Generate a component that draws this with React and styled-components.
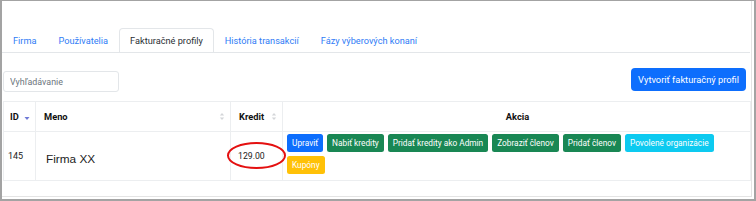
import styled, { createGlobalStyle } from 'styled-components'

const GlobalStyle = createGlobalStyle`
  html, body {
    margin: 0;
    padding: 0;
    background: #fff;
  }
  body {
    font-family: Roboto, "Noto Sans", "Liberation Sans", sans-serif;
    color: #212529;
  }
`

const Frame = styled.div`
  box-sizing: border-box;
  width: 756px;
  height: 201px;
  border-style: solid;
  border-color: #a3a3a3;
  border-width: 1px 2px 2px 2px;
  box-shadow: inset -2px -2px 0 0 #fff, inset -3px -3px 0 0 #e4e4e4;
  padding: 27px 4px 0 0;
  overflow: hidden;
`

const Tabs = styled.ul`
  display: flex;
  margin: 0;
  padding: 0;
  list-style: none;
  height: 24px;
  border-bottom: 1px solid #e3e6e9;
`

const Tab = styled.li`
  display: flex;
  align-items: center;
  padding: 0 10px;
  font-size: 9.2px;
  color: ${(p) => (p.$active ? '#2b3035' : '#2f7cf6')};
  background: #fff;
  border: 1px solid ${(p) => (p.$active ? '#e3e6e9' : 'transparent')};
  border-bottom: none;
  border-radius: 4px 4px 0 0;
  margin-bottom: -1px;
  height: 24px;
  box-sizing: border-box;
`

const Toolbar = styled.div`
  display: flex;
  justify-content: space-between;
  align-items: flex-start;
  margin: 15px 0 0 1px;
  height: 24px;
`

const Search = styled.input`
  box-sizing: border-box;
  width: 116px;
  height: 21px;
  margin-top: 3px;
  padding: 0 6px;
  border: 1px solid #e3e6e9;
  border-radius: 3px;
  font-family: inherit;
  font-size: 8.9px;
  color: #495057;
  outline: none;

  &::placeholder {
    color: #6c757d;
  }
`

const PrimaryButton = styled.button`
  box-sizing: border-box;
  height: 23px;
  margin-right: 4px;
  padding: 0 7px;
  border: none;
  border-radius: 4px;
  background: #0d6efd;
  color: #fff;
  font-family: inherit;
  font-size: 9.3px;
`

const Table = styled.table`
  width: 748px;
  margin: 9px 0 0 1px;
  border-collapse: collapse;
  table-layout: fixed;
`

const Th = styled.th`
  box-sizing: border-box;
  width: ${(p) => p.$w || 'auto'};
  height: 30px;
  padding: 0 5px 0 ${(p) => p.$pl || '7px'};
  border: 1px solid #eceef0;
  font-size: 9.3px;
  font-weight: 700;
  text-align: ${(p) => p.$align || 'left'};
  color: #111;
`

const HeadInner = styled.div`
  display: flex;
  align-items: center;
  justify-content: ${(p) => (p.$center ? 'center' : 'space-between')};
`

const Td = styled.td`
  box-sizing: border-box;
  position: relative;
  height: 49px;
  padding: 0 4px 0 ${(p) => p.$pl || '4px'};
  border: 1px solid #eceef0;
  vertical-align: middle;
  font-size: ${(p) => p.$size || '8.7px'};
  font-family: ${(p) => (p.$plain ? '"Liberation Sans", Arial, sans-serif' : 'inherit')};
  color: #222;
`

const CompanyName = styled.span`
  display: inline-block;
  margin-top: 5px;
`

const Actions = styled.div`
  display: flex;
  flex-wrap: wrap;
  gap: 4px;
  align-content: flex-start;
  height: 40px;
  margin-top: -4px;
`

const colors = {
  primary: '#0d6efd',
  success: '#198754',
  info: '#0dcaf0',
  warning: '#ffc107',
}

const ActionButton = styled.button`
  box-sizing: border-box;
  height: 18px;
  padding: 0 5px;
  border: none;
  border-radius: 2.5px;
  background: ${(p) => colors[p.$variant]};
  color: #fff;
  font-family: inherit;
  font-size: 8.3px;
  white-space: nowrap;
`

const Ellipse = styled.svg`
  position: absolute;
  left: -4px;
  top: 10px;
  overflow: visible;
  pointer-events: none;
`

const SortIcon = ({ active }) =>
  active ? (
    <svg width="6" height="9" viewBox="0 0 6 9">
      <path d="M0.5 5 L5.5 5 L3 8 Z" fill="#6f79d6" />
    </svg>
  ) : (
    <svg width="6" height="9" viewBox="0 0 6 9">
      <path d="M0.8 3.6 L5.2 3.6 L3 1 Z" fill="#d4d6d9" />
      <path d="M0.8 5.4 L5.2 5.4 L3 8 Z" fill="#d4d6d9" />
    </svg>
  )

const tabs = ['Firma', 'Používatelia', 'Fakturačné profily', 'História transakcií', 'Fázy výberových konaní']

const actions = [
  ['Upraviť', 'primary'],
  ['Nabiť kredity', 'success'],
  ['Pridať kredity ako Admin', 'success'],
  ['Zobraziť členov', 'success'],
  ['Pridať členov', 'success'],
  ['Povolené organizácie', 'info'],
  ['Kupóny', 'warning'],
]

export default function App() {
  return (
    <>
      <GlobalStyle />
      <Frame>
        <Tabs>
          {tabs.map((t) => (
            <Tab key={t} $active={t === 'Fakturačné profily'}>
              {t}
            </Tab>
          ))}
        </Tabs>

        <Toolbar>
          <Search placeholder="Vyhľadávanie" />
          <PrimaryButton>Vytvoriť fakturačný profil</PrimaryButton>
        </Toolbar>

        <Table>
          <thead>
            <tr>
              <Th $w="32px" $pl="6px">
                <HeadInner>
                  ID <SortIcon active />
                </HeadInner>
              </Th>
              <Th $w="195px" $pl="8px">
                <HeadInner>
                  Meno <SortIcon />
                </HeadInner>
              </Th>
              <Th $w="52px" $pl="8px">
                <HeadInner>
                  Kredit <SortIcon />
                </HeadInner>
              </Th>
              <Th $align="center">
                <HeadInner $center>Akcia</HeadInner>
              </Th>
            </tr>
          </thead>
          <tbody>
            <tr>
              <Td $size="9px">145</Td>
              <Td $pl="10px" $size="11.8px" $plain>
                <CompanyName>Firma XX</CompanyName>
              </Td>
              <Td $pl="7px">
                129.00
                <Ellipse width="59" height="27" viewBox="0 0 59 27">
                  <ellipse cx="29.5" cy="13.5" rx="28.5" ry="12.5" fill="none" stroke="#e41010" strokeWidth="2" />
                </Ellipse>
              </Td>
              <Td>
                <Actions>
                  {actions.map(([label, variant]) => (
                    <ActionButton key={label} $variant={variant}>
                      {label}
                    </ActionButton>
                  ))}
                </Actions>
              </Td>
            </tr>
          </tbody>
        </Table>
      </Frame>
    </>
  )
}
